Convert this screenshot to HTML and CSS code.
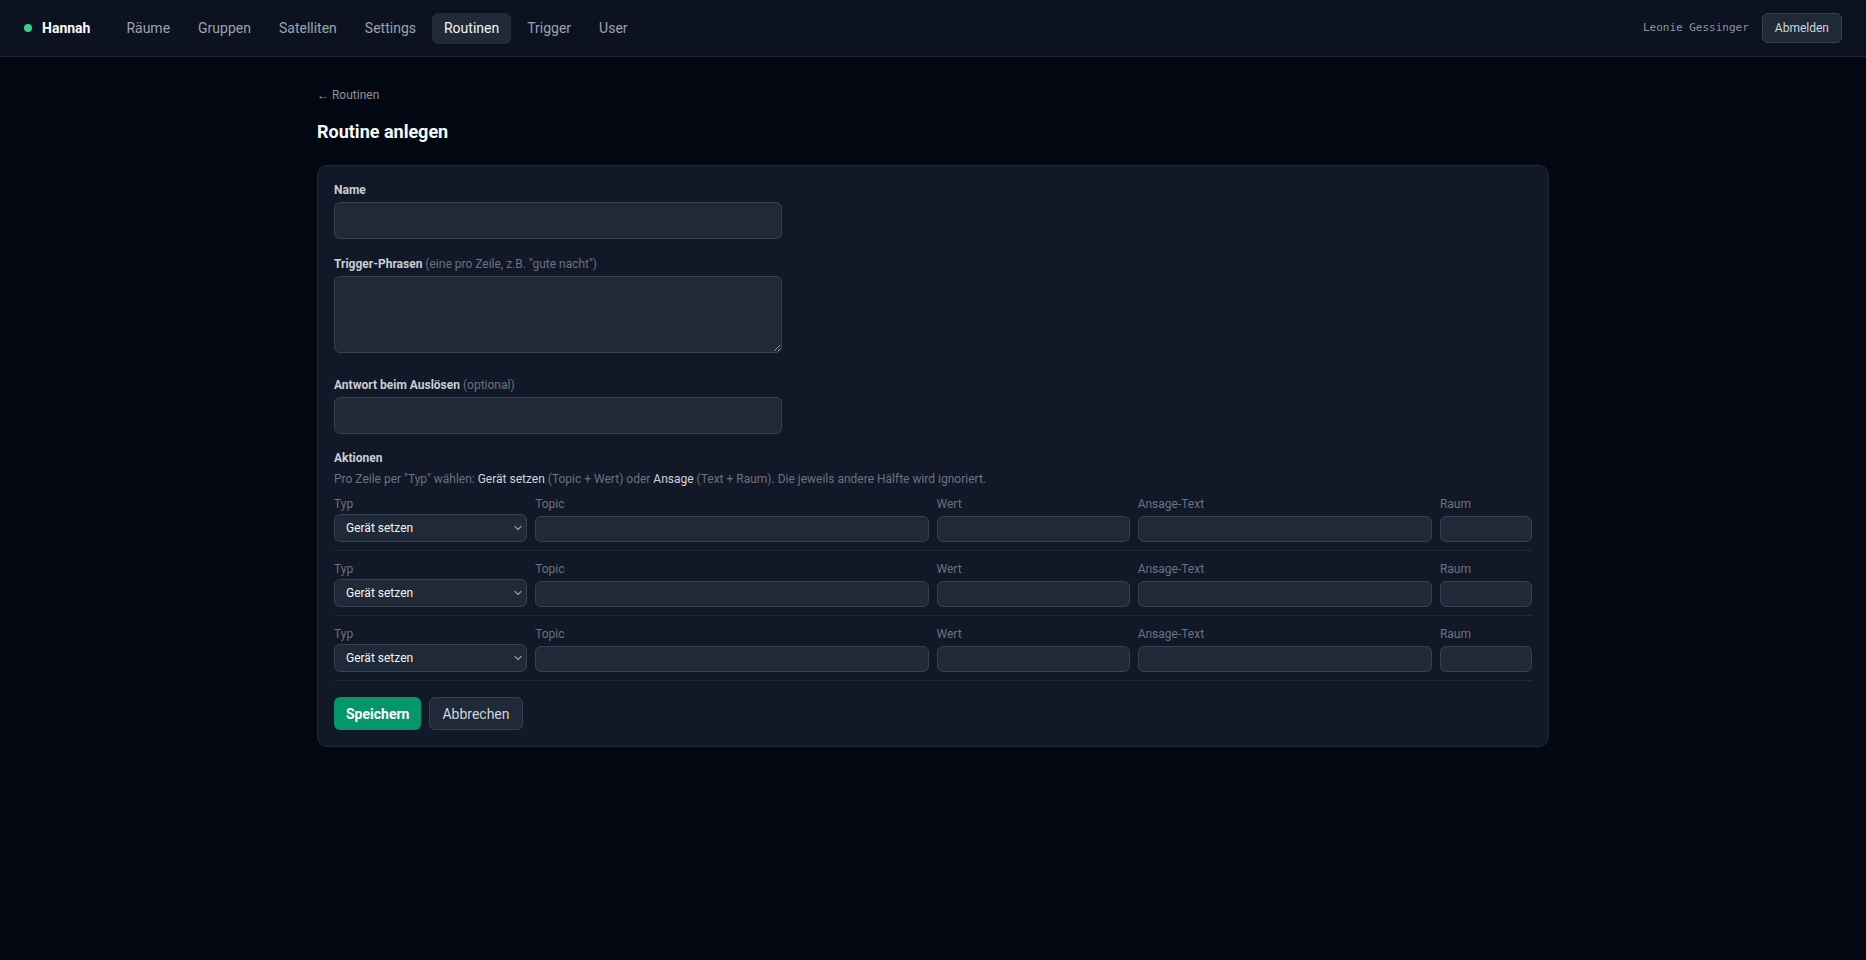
FILE: index.html
```html
<!DOCTYPE html>
<html lang="de">
<head>
<meta charset="utf-8">
<title>Routine anlegen</title>
<link rel="stylesheet" href="styles.css">
</head>
<body>
<nav class="topbar">
  <div class="nav-left">
    <a class="brand" href="#"><span class="dot"></span>Hannah</a>
    <div class="links">
      <a class="link" href="#">Räume</a>
      <a class="link" href="#">Gruppen</a>
      <a class="link" href="#">Satelliten</a>
      <a class="link" href="#">Settings</a>
      <a class="link active" href="#">Routinen</a>
      <a class="link" href="#">Trigger</a>
      <a class="link" href="#">User</a>
    </div>
  </div>
  <div class="nav-right">
    <span class="user">Leonie Gessinger</span>
    <button class="btn-logout" type="button">Abmelden</button>
  </div>
</nav>

<main class="page">
  <a class="back" href="#">← Routinen</a>
  <h1 class="title">Routine anlegen</h1>

  <form class="card">
    <div class="field">
      <label class="label">Name</label>
      <input class="input" type="text">
    </div>
    <div class="field field-area">
      <label class="label">Trigger-Phrasen <span class="hint">(eine pro Zeile, z.B. "gute nacht")</span></label>
      <textarea class="input textarea"></textarea>
    </div>
    <div class="field field-last">
      <label class="label">Antwort beim Auslösen <span class="hint">(optional)</span></label>
      <input class="input" type="text">
    </div>

    <div class="actions">
      <div class="label">Aktionen</div>
      <p class="desc">Pro Zeile per "Typ" wählen: <span class="em">Gerät setzen</span> (Topic + Wert) oder <span class="em">Ansage</span> (Text + Raum). Die jeweils andere Hälfte wird ignoriert.</p>

      <div class="action-row">
        <label class="cell"><span class="cell-label">Typ</span>
          <span class="select-wrap"><select class="select"><option>Gerät setzen</option><option>Ansage</option></select>
          <svg class="chev" viewBox="0 0 10 10" width="10" height="10"><path d="M2 3.5 L5 6.5 L8 3.5" fill="none" stroke="#8b93a0" stroke-width="1.3" stroke-linecap="round" stroke-linejoin="round"/></svg></span>
        </label>
        <label class="cell"><span class="cell-label">Topic</span><input class="small-input" type="text"></label>
        <label class="cell"><span class="cell-label">Wert</span><input class="small-input" type="text"></label>
        <label class="cell"><span class="cell-label">Ansage-Text</span><input class="small-input" type="text"></label>
        <label class="cell"><span class="cell-label">Raum</span><input class="small-input" type="text"></label>
      </div>

      <div class="action-row">
        <label class="cell"><span class="cell-label">Typ</span>
          <span class="select-wrap"><select class="select"><option>Gerät setzen</option><option>Ansage</option></select>
          <svg class="chev" viewBox="0 0 10 10" width="10" height="10"><path d="M2 3.5 L5 6.5 L8 3.5" fill="none" stroke="#8b93a0" stroke-width="1.3" stroke-linecap="round" stroke-linejoin="round"/></svg></span>
        </label>
        <label class="cell"><span class="cell-label">Topic</span><input class="small-input" type="text"></label>
        <label class="cell"><span class="cell-label">Wert</span><input class="small-input" type="text"></label>
        <label class="cell"><span class="cell-label">Ansage-Text</span><input class="small-input" type="text"></label>
        <label class="cell"><span class="cell-label">Raum</span><input class="small-input" type="text"></label>
      </div>

      <div class="action-row">
        <label class="cell"><span class="cell-label">Typ</span>
          <span class="select-wrap"><select class="select"><option>Gerät setzen</option><option>Ansage</option></select>
          <svg class="chev" viewBox="0 0 10 10" width="10" height="10"><path d="M2 3.5 L5 6.5 L8 3.5" fill="none" stroke="#8b93a0" stroke-width="1.3" stroke-linecap="round" stroke-linejoin="round"/></svg></span>
        </label>
        <label class="cell"><span class="cell-label">Topic</span><input class="small-input" type="text"></label>
        <label class="cell"><span class="cell-label">Wert</span><input class="small-input" type="text"></label>
        <label class="cell"><span class="cell-label">Ansage-Text</span><input class="small-input" type="text"></label>
        <label class="cell"><span class="cell-label">Raum</span><input class="small-input" type="text"></label>
      </div>
    </div>

    <div class="buttons">
      <button class="btn btn-primary" type="submit">Speichern</button>
      <button class="btn btn-secondary" type="button">Abbrechen</button>
    </div>
  </form>
</main>
</body>
</html>
```

FILE: styles.css
```css
* { box-sizing: border-box; }

html { color-scheme: dark; }

body {
  margin: 0;
  background: #030712;
  color: #e5e7eb;
  font-family: Roboto, "Liberation Sans", Arial, sans-serif;
  font-size: 14px;
  line-height: 20px;
  min-height: 960px;
}

a { text-decoration: none; color: inherit; }

/* ---------- top bar ---------- */
.topbar {
  height: 57px;
  display: flex;
  align-items: center;
  justify-content: space-between;
  padding: 0 24px;
  background: #0d1220;
  border-bottom: 1px solid #1c2431;
}

.nav-left {
  display: flex;
  align-items: center;
}

.brand {
  display: flex;
  align-items: center;
  gap: 10px;
  margin-right: 24px;
  font-weight: 700;
  font-size: 14px;
  color: #f9fafb;
}

.dot {
  width: 8px;
  height: 8px;
  border-radius: 50%;
  background: #34d399;
}

.links {
  display: flex;
  align-items: center;
  gap: 4px;
}

.link {
  padding: 6px 12px;
  line-height: 19px;
  border-radius: 6px;
  color: #9ca3af;
}

.link.active {
  background: #1f2937;
  color: #f3f4f6;
}

.nav-right {
  display: flex;
  align-items: center;
  gap: 13px;
}

.user {
  font-family: "DejaVu Sans Mono", "Liberation Mono", monospace;
  font-size: 11px;
  color: #8b93a0;
}

.btn-logout {
  font-family: inherit;
  font-size: 12px;
  line-height: 18px;
  padding: 5px 12px;
  border-radius: 6px;
  border: 1px solid #374151;
  background: #1f2937;
  color: #d1d5db;
}

/* ---------- page ---------- */
.page {
  max-width: 1232px;
  margin: 0 auto;
  padding-top: 30px;
}

.back {
  display: block;
  font-size: 12px;
  line-height: 16px;
  color: #8b93a0;
}

.title {
  margin: 15px 0 19px;
  font-size: 18px;
  line-height: 28px;
  font-weight: 700;
  color: #f9fafb;
}

.card {
  background: #111827;
  border: 1px solid #1f2937;
  border-radius: 10px;
  padding: 16px;
}

.field {
  display: flex;
  flex-direction: column;
  margin-bottom: 17px;
}

.field-area { margin-bottom: 24px; }
.field-last { margin-bottom: 16px; }

.label {
  display: block;
  font-size: 12px;
  line-height: 16px;
  font-weight: 700;
  color: #c9ced6;
  margin-bottom: 4px;
}

.hint {
  font-weight: 400;
  color: #6b7280;
}

.input {
  width: 448px;
  height: 37px;
  padding: 8px 12px;
  font: inherit;
  color: #f3f4f6;
  background: #1f2937;
  border: 1px solid #374151;
  border-radius: 6px;
  outline: none;
}

.textarea {
  height: 77px;
  display: block;
}

.actions .label { margin-bottom: 5px; }

.desc {
  margin: 0 0 9px;
  font-size: 12px;
  line-height: 16px;
  color: #6b7280;
}

.em { color: #d1d5db; }

.action-row {
  display: grid;
  grid-template-columns: 193fr 393fr 193fr 294fr 92fr;
  gap: 8px;
  padding-bottom: 8px;
  margin-bottom: 10px;
  border-bottom: 1px solid #1f2937;
}

.action-row:last-child { margin-bottom: 16px; }

.cell {
  display: flex;
  flex-direction: column;
  min-width: 0;
}

.cell-label {
  font-size: 12px;
  line-height: 16px;
  color: #6b7280;
  margin-bottom: 2px;
}

.select-wrap {
  position: relative;
  display: block;
}

.select {
  appearance: none;
  -webkit-appearance: none;
  width: 100%;
  height: 28px;
  padding: 0 28px 0 11px;
  font-family: inherit;
  font-size: 12px;
  color: #f3f4f6;
  background: #1f2937;
  border: 1px solid #374151;
  border-radius: 6px;
  outline: none;
}

.chev {
  position: absolute;
  right: 4px;
  top: 9px;
  pointer-events: none;
}

.small-input {
  width: 100%;
  height: 26px;
  margin-top: 2px;
  padding: 0 8px;
  font-family: inherit;
  font-size: 12px;
  color: #f3f4f6;
  background: #1f2937;
  border: 1px solid #374151;
  border-radius: 6px;
  outline: none;
}

.buttons {
  display: flex;
  gap: 8px;
}

.btn {
  font-family: inherit;
  font-size: 14px;
  line-height: 20px;
  border-radius: 6px;
  cursor: pointer;
}

.btn-primary {
  padding: 6.5px 12px;
  border: none;
  background: #059669;
  color: #ffffff;
  font-weight: 700;
}

.btn-secondary {
  padding: 5.5px 12px;
  border: 1px solid #374151;
  background: #1f2937;
  color: #d1d5db;
}
```
